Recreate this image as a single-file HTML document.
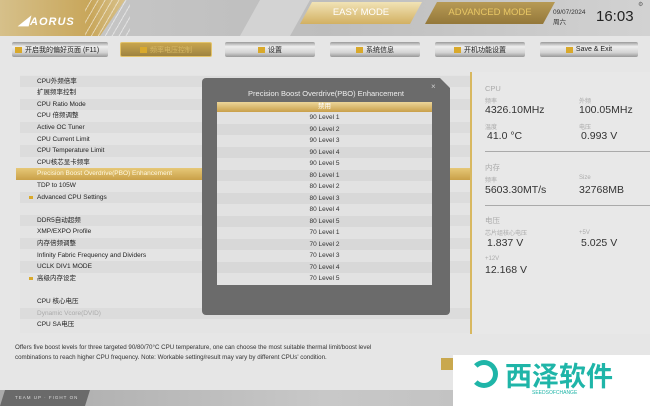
<!DOCTYPE html>
<html><head><meta charset="utf-8"><style>
*{margin:0;padding:0;box-sizing:border-box}
body{width:650px;height:406px;overflow:hidden;background:#e6e6e6;font-family:"Liberation Sans","Noto Sans CJK SC",sans-serif;position:relative}
.a{position:absolute}
.hdr{left:0;top:0;width:650px;height:36px;background:linear-gradient(90deg,#c9c9c9,#bdbdbd 50%,#d2d2d2)}
.logo{left:0;top:0;width:150px;height:36px;background:linear-gradient(90deg,#d6c08a,#c8a65a 60%,#e4d6b0);clip-path:polygon(0 0,125px 0,100px 36px,0 36px)}
.stripe{left:85px;top:0;width:45px;height:36px;background:repeating-linear-gradient(120deg,transparent 0 5px,rgba(255,255,255,.5) 5px 6px)}
.tab{top:42px;height:15px;background:linear-gradient(#9a9a9a,#eee 30%,#d4d4d4 70%,#999);border-radius:2px;font-size:7px;color:#222;display:flex;align-items:center;justify-content:center;gap:3px}
.tab i{display:inline-block;width:7px;height:6px;background:#d9a92b}
.row{left:20px;width:450px;height:11.6px;font-size:6.5px;color:#222;padding-left:17px;line-height:11.6px}
.it{left:217px;width:215px;height:11.5px;font-size:6.5px;color:#333;text-align:center;line-height:11.5px}
.lbl{font-size:6px;color:#aaa}
.val{font-size:10.5px;color:#333}
</style></head><body>
<div class="a hdr"></div>
<div class="a logo"></div>
<div class="a stripe"></div>
<div class="a" style="left:18px;top:13px;font-size:11px;font-style:italic;font-weight:bold;color:#fff;letter-spacing:1px">◢AORUS</div>
<div class="a" style="left:240px;top:0;width:70px;height:36px;background:#d3d3d3;clip-path:polygon(20px 0,70px 0,50px 36px,0 36px)"></div>
<div class="a" style="left:300px;top:2px;width:122px;height:22px;background:linear-gradient(#f1e3b6,#d2b062);clip-path:polygon(12px 0,122px 0,110px 22px,0 22px);color:#fff;font-size:9.5px;text-align:center;line-height:22px">EASY MODE</div>
<div class="a" style="left:425px;top:2px;width:130px;height:22px;background:linear-gradient(#b79a55,#94783a);clip-path:polygon(12px 0,130px 0,118px 22px,0 22px);color:#e8c765;font-size:9.5px;text-align:center;line-height:22px">ADVANCED MODE</div>
<div class="a" style="left:553px;top:9px;font-size:6.5px;color:#333">09/07/2024<br>周六</div>
<div class="a" style="left:596px;top:8px;font-size:15px;color:#222">16:03</div>
<div class="a" style="left:638px;top:1px;font-size:6px;color:#666">⚙</div>
<div class="a tab" style="left:12px;width:96px;justify-content:flex-start;padding-left:3px"><i></i>开启我的偏好页面 (F11)</div>
<div class="a tab" style="left:120px;width:92px;background:linear-gradient(#c8a54e,#9e8340);border:1px solid #e3c36a;color:#d6b864"><i></i>频率电压控制</div>
<div class="a tab" style="left:225px;width:90px"><i></i>设置</div>
<div class="a tab" style="left:330px;width:90px"><i></i>系统信息</div>
<div class="a tab" style="left:435px;width:90px"><i></i>开机功能设置</div>
<div class="a tab" style="left:540px;width:98px"><i></i>Save &amp; Exit</div>
<div class="a" style="left:20px;top:75px;width:450px;height:258px;background:#e4e4e4"></div>
<div class="a row" style="top:75.5px;background:#dcdcdc">CPU外频倍率</div>
<div class="a row" style="top:87.1px">扩展频率控制</div>
<div class="a row" style="top:98.7px;background:#dcdcdc">CPU Ratio Mode</div>
<div class="a row" style="top:110.3px">CPU 倍频调整</div>
<div class="a row" style="top:121.9px;background:#dcdcdc">Active OC Tuner</div>
<div class="a row" style="top:133.5px">CPU Current Limit</div>
<div class="a row" style="top:145.1px;background:#dcdcdc">CPU Temperature Limit</div>
<div class="a row" style="top:156.7px">CPU核芯显卡频率</div>
<div class="a row" style="top:168.3px;background:linear-gradient(#e6c878,#c9a048);color:#fff8e0;left:16px;width:454px;padding-left:21px">Precision Boost Overdrive(PBO) Enhancement</div>
<div class="a row" style="top:179.9px">TDP to 105W</div>
<div class="a row" style="top:191.5px;background:#dcdcdc">Advanced CPU Settings</div>
<div class="a" style="left:29px;top:196px;width:4px;height:3px;background:#d9a92b"></div>
<div class="a row" style="top:214.7px;background:#dcdcdc">DDR5自动超频</div>
<div class="a row" style="top:226.3px">XMP/EXPO Profile</div>
<div class="a row" style="top:237.9px;background:#dcdcdc">内存倍频调整</div>
<div class="a row" style="top:249.5px">Infinity Fabric Frequency and Dividers</div>
<div class="a row" style="top:261.1px;background:#dcdcdc">UCLK DIV1 MODE</div>
<div class="a row" style="top:272.7px">高级内存设定</div>
<div class="a" style="left:29px;top:277px;width:4px;height:3px;background:#d9a92b"></div>
<div class="a row" style="top:295.9px">CPU 核心电压</div>
<div class="a row" style="top:307.5px;background:#dcdcdc;color:#aaa">Dynamic Vcore(DVID)</div>
<div class="a row" style="top:319.1px">CPU SA电压</div>
<div class="a" style="left:202px;top:78px;width:248px;height:237px;background:#6b6b6b;border-radius:4px;clip-path:polygon(0 0,238px 0,248px 10px,248px 237px,0 237px)"></div>
<div class="a" style="left:202px;top:89px;width:248px;text-align:center;font-size:7.5px;color:#eee">Precision Boost Overdrive(PBO) Enhancement</div>
<div class="a" style="left:431px;top:82px;font-size:8px;color:#ccc">×</div>
<div class="a" style="left:217px;top:102px;width:215px;height:183px;background:#e2e2e2"></div>
<div class="a it" style="top:102px;background:linear-gradient(#ecd69a,#c9a04a);color:#fff;height:10px;line-height:10px">禁用</div>
<div class="a it" style="top:112px">90 Level 1</div>
<div class="a it" style="top:123.5px;background:#d8d8d8">90 Level 2</div>
<div class="a it" style="top:135px">90 Level 3</div>
<div class="a it" style="top:146.5px;background:#d8d8d8">90 Level 4</div>
<div class="a it" style="top:158px">90 Level 5</div>
<div class="a it" style="top:169.5px;background:#d8d8d8">80 Level 1</div>
<div class="a it" style="top:181px">80 Level 2</div>
<div class="a it" style="top:192.5px;background:#d8d8d8">80 Level 3</div>
<div class="a it" style="top:204px">80 Level 4</div>
<div class="a it" style="top:215.5px;background:#d8d8d8">80 Level 5</div>
<div class="a it" style="top:227px">70 Level 1</div>
<div class="a it" style="top:238.5px;background:#d8d8d8">70 Level 2</div>
<div class="a it" style="top:250px">70 Level 3</div>
<div class="a it" style="top:261.5px;background:#d8d8d8">70 Level 4</div>
<div class="a it" style="top:273px">70 Level 5</div>
<div class="a" style="left:470px;top:72px;width:2px;height:262px;background:#d8b860"></div>
<div class="a" style="left:472px;top:72px;width:178px;height:262px;background:#e8e8e8"></div>
<div class="a" style="left:485px;top:84px;font-size:7.5px;color:#aaa">CPU</div>
<div class="a lbl" style="left:485px;top:96px">频率</div><div class="a val" style="left:485px;top:104px">4326.10MHz</div>
<div class="a lbl" style="left:579px;top:96px">外频</div><div class="a val" style="left:579px;top:104px">100.05MHz</div>
<div class="a lbl" style="left:485px;top:122px">温度</div><div class="a val" style="left:487px;top:130px">41.0 °C</div>
<div class="a lbl" style="left:579px;top:122px">电压</div><div class="a val" style="left:581px;top:130px">0.993 V</div>
<div class="a" style="left:485px;top:151px;width:165px;height:1px;background:#aaa"></div>
<div class="a" style="left:485px;top:162px;font-size:7.5px;color:#aaa">内存</div>
<div class="a lbl" style="left:485px;top:175px">频率</div><div class="a val" style="left:485px;top:184px">5603.30MT/s</div>
<div class="a lbl" style="left:579px;top:175px">Size</div><div class="a val" style="left:579px;top:184px">32768MB</div>
<div class="a" style="left:485px;top:205px;width:165px;height:1px;background:#aaa"></div>
<div class="a" style="left:485px;top:215px;font-size:7.5px;color:#aaa">电压</div>
<div class="a lbl" style="left:485px;top:228px">芯片组核心电压</div><div class="a val" style="left:487px;top:237px">1.837 V</div>
<div class="a lbl" style="left:579px;top:230px">+5V</div><div class="a val" style="left:581px;top:237px">5.025 V</div>
<div class="a lbl" style="left:485px;top:256px">+12V</div><div class="a val" style="left:485px;top:264px">12.168 V</div>
<div class="a" style="left:15px;top:343px;font-size:6.2px;color:#333;line-height:9.5px">Offers five boost levels for three targeted 90/80/70°C CPU temperature, one can choose the most suitable thermal limit/boost level<br>combinations to reach higher CPU frequency. Note: Workable setting/result may vary by different CPUs' condition.</div>
<div class="a" style="left:0;top:390px;width:650px;height:16px;background:linear-gradient(90deg,#aaa,#c8c8c8,#bbb)"></div>
<div class="a" style="left:0;top:390px;width:90px;height:16px;background:#6a6a6a;clip-path:polygon(5px 0,90px 0,85px 16px,0 16px);font-size:4.5px;color:#ddd;letter-spacing:1px;padding:5px 0 0 15px;white-space:nowrap">TEAM UP · FIGHT ON</div>
<div class="a" style="left:441px;top:358px;width:12px;height:12px;background:#c9a84e"></div>
<div class="a" style="left:453px;top:355px;width:197px;height:51px;background:#fff"></div>
<div class="a" style="left:470px;top:360px;width:28px;height:28px;border-radius:50%;border:5px solid #1fb5a8;border-left-color:transparent"></div>
<div class="a" style="left:505px;top:355px;font-size:27px;font-weight:bold;color:#1fb5a8;font-family:'Noto Sans CJK SC',sans-serif">西泽软件</div>
<div class="a" style="left:532px;top:390px;font-size:5px;color:#1fb5a8">SEEDSOFCHANGE</div>
</body></html>
